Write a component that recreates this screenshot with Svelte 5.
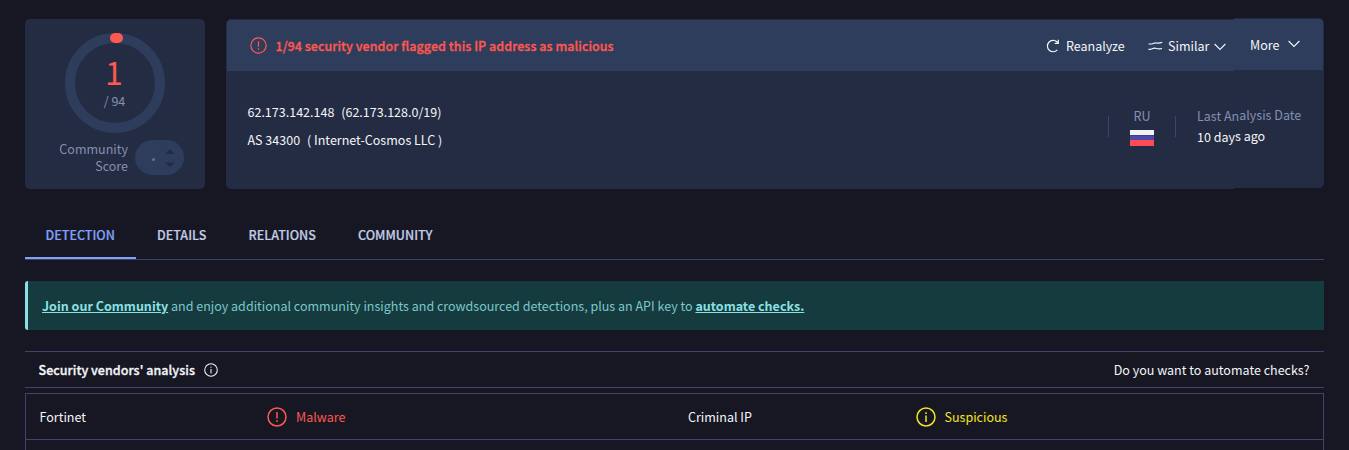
<script>
  const tabs = [
    { label: 'DETECTION', left: 20.5, width: 111, active: true },
    { label: 'DETAILS', left: 21, width: 92 },
    { label: 'RELATIONS', left: 20.5, width: 109 },
    { label: 'COMMUNITY', left: 21, width: 117 }
  ];
</script>

{#snippet alertIcon(size, stroke)}
  <svg class="icon" width={size} height={size} viewBox="0 0 20 20" fill="none" stroke="currentColor" stroke-width={stroke}>
    <circle cx="10" cy="10" r="9" />
    <path d="M10 5v6.5M10 13.3v1.6" />
  </svg>
{/snippet}

{#snippet infoIcon(size, stroke)}
  <svg class="icon" width={size} height={size} viewBox="0 0 20 20" fill="none" stroke="currentColor" stroke-width={stroke}>
    <circle cx="10" cy="10" r="9" />
    <path d="M10 8.6v6.4M10 5.2v1.7" />
  </svg>
{/snippet}

{#snippet chevron()}
  <svg class="icon" width="12" height="8" viewBox="0 0 12 8" fill="none" stroke="currentColor" stroke-width="1.1">
    <path d="M.6 1 6 6.4 11.4 1" />
  </svg>
{/snippet}

<main>
  <section class="top">
    <div class="score">
      <div class="dial">
        <svg width="100" height="100" viewBox="0 0 100 100" fill="none">
          <circle cx="50" cy="50" r="45" stroke="#2e3d5c" stroke-width="10" />
          <path d="M50 5h3" stroke="#ff5850" stroke-width="10" stroke-linecap="round" />
        </svg>
        <div class="count"><b>1</b><span>/ 94</span></div>
      </div>
      <div class="community">
        <div class="clabel">Community<br />Score</div>
        <div class="pill">
          <i></i>
          <svg width="10" height="18" viewBox="0 0 10 18" fill="#242c43"><path d="M0 5 5 0l5 5zM0 13.500h10L5 18z" /></svg>
        </div>
      </div>
    </div>

    <div class="card">
      <div class="panel main">
        <div class="bar">
          {@render alertIcon(17, 1.4)}
          <strong>1/94 security vendor flagged this IP address as malicious</strong>
          <span class="action re">
            <svg class="icon" width="14" height="14" viewBox="0 0 14 14" fill="none" stroke="currentColor" stroke-width="1.2">
              <path d="M11.300 10.900A5.700 5.700 0 1 1 10.900 2.800L12.200 4.100M12.300.8v3.600H8.700" />
            </svg>
            Reanalyze
          </span>
          <span class="action sim">
            <svg class="icon" width="15" height="10" viewBox="0 0 15 10" fill="none" stroke="currentColor" stroke-width="1.200">
              <path d="M.5 3h2.300C5 3 5.800 1.700 7.800 2s3.700.6 6.400-.7M.5 8.300h1.300C4 8.300 4.800 6.900 6.800 7.200s3.200.9 5.200.6l2-.3" />
            </svg>
            <span>Similar</span>
            {@render chevron()}
          </span>
        </div>
        <div class="body">
          <div class="ip">
            <div>62.173.142.148&nbsp; <span>(62.173.128.0/19)</span></div>
            <div>AS 34300&nbsp; <span>( Internet-Cosmos LLC )</span></div>
          </div>
          <div class="country">
            <span>RU</span>
            <div class="flag"></div>
          </div>
          <div class="date">
            <div class="muted">Last An<span>alysis Date</span></div>
            <div class="when">10 day<span>s ago</span></div>
          </div>
        </div>
      </div>
      <div class="panel side">
        <div class="bar"><span class="more">More</span>{@render chevron()}</div>
      </div>
    </div>
  </section>

  <nav>
    {#each tabs as t}
      <div class="tab" class:active={t.active} style="width:{t.width}px;padding-left:{t.left}px">{t.label}</div>
    {/each}
  </nav>

  <p class="banner"><a>Join our Community</a> and enjoy additional community insights and crowdsourced detections, plus an API key to <a>automate checks.</a></p>

  <div class="heading">
    <strong>Security vendors' analysis</strong>
    {@render infoIcon(14, 1.500)}
    <span>Do you want to automate checks?</span>
  </div>

  <div class="table">
    <div class="row">
      <span>Fortinet</span>
      <span class="verdict bad">{@render alertIcon(20, 1.500)}Malware</span>
      <span>Criminal IP</span>
      <span class="verdict warn">{@render infoIcon(20, 1.500)}Suspicious</span>
    </div>
    <div class="row"></div>
  </div>
</main>

<style>
  :global(body) { background: #171723; overflow: hidden; }
  * { box-sizing: border-box; }
  main {
    width: 1349px; height: 450px; padding: 19px 25px 0; overflow: hidden;
    font: 12.52px/18px "Noto Sans CJK SC", "Noto Sans CJK JP", sans-serif;
    color: #f4f5f8; white-space: nowrap;
  }
  strong { font-weight: 500; letter-spacing: .04px; -webkit-text-stroke: .3px currentColor; }
  .icon { flex: none; display: block; }
  .top { display: flex; gap: 21px; height: 170px; }
  .score { width: 180px; background: #242c43; border-radius: 5px; padding: 14px 0 0 40px; }
  .dial { display: grid; width: 100px; height: 100px; }
  .dial > * { grid-area: 1 / 1; }
  .count { display: flex; flex-direction: column; align-items: center; padding-top: 17px; color: #8290b1; }
  .count b { font-weight: 400; font-size: 32px; line-height: 42px; color: #ff5850; margin-right: 2px; }
  .count span { line-height: 18px; margin-right: 1px; }
  .community { display: flex; margin-left: -20px; gap: 7px; }
  .clabel { width: 83px; text-align: right; line-height: 17px; color: #8290b1; padding-top: 7px; }
  .pill { width: 49px; height: 35px; border-radius: 18px; background: #2e3d5c; margin-top: 7px; display: flex; align-items: center; padding-left: 17px; gap: 10px; }
  .pill i { width: 3px; height: 3px; border-radius: 50%; background: #61728f; margin-top: 3px; }
  .card { display: flex; width: 1098px; }
  .panel { background: #242c43; height: 170px; }
  .panel.main { width: 1008px; border-radius: 5px 0 0 5px; position: relative; z-index: 1; padding: 1px 0 0 1px; }
  .panel.side { width: 90px; margin-top: -1px; border-radius: 0 5px 5px 0; padding: 1px 1px 0 0; }
  .bar { height: 51px; background: #2e3d5c; display: flex; align-items: center; }
  .main .bar { border-radius: 4px 0 0 0; padding-left: 23px; color: #ff5850; }
  .main .bar strong { margin-left: 8.5px; width: 770.5px; }
  .action { display: flex; align-items: center; color: #f4f5f8; }
  .re { gap: 6px; width: 102px; }
  .sim { gap: 5px; }
  .sim span { width: 41px; }
  .sim span + .icon { margin-top: 2px; }
  .side .bar { border-radius: 0 4px 0 0; padding-left: 16px; }
  .side .icon { margin-top: -2px; }
  .more { width: 38px; }
  .body { display: flex; height: 118px; padding-left: 20.5px; }
  .body > * { flex: none; }
  .ip { width: 860.5px; padding-top: 27px; line-height: 28px; }
  .ip span { margin-left: 1.3px; }
  .country { display: flex; flex-direction: column; align-items: center; width: 68px; height: 21px; border: solid #3a4867; border-width: 0 1px; margin-top: 45px; color: #8290b1; }
  .country span { margin-top: -9px; line-height: 18px; }
  .flag { flex: none; width: 24px; height: 16px; margin-top: 5px; background: linear-gradient(#f3f3f5 5px, #3b3e91 5px 6px, #4b4ba7 6px 10px, #ff4b55 10px); }
  .date { padding: 34px 0 0 21px; line-height: 21px; width: 130px; }
  .date span { position: relative; top: -1px; }
  .muted { color: #8290b1; }
  nav { display: flex; margin-top: 23px; height: 48px; border-bottom: 1px solid #37456a; font-weight: 500; -webkit-text-stroke: .2px currentColor; color: #c0cce4; }
  .tab { padding-top: 14px; height: 47px; }
  .tab.active { color: #80a0f8; border-bottom: 2px solid #80a0f8; }
  .banner { margin: 21px 0 0; height: 49px; border-left: 3px solid #8be0e3; border-radius: 3px 0 0 3px; background: #153b3e; color: #7bc7cb; padding-left: 14px; line-height: 50px; }
  .banner a { font-weight: 700; color: #8be0e3; text-decoration: underline; }
  .heading { height: 37px; margin-top: 21px; border: solid #3c4569; border-width: 1px 0; display: flex; align-items: center; padding: 0 14.5px 0 13.5px; gap: 9px; }
  .heading span { margin-left: auto; }
  .table { margin-top: 5px; border: 1px solid #3c4569; height: 80px; }
  .row { height: 46px; border-bottom: 1px solid #3c4569; display: grid; grid-template-columns: 227.5px 421px 227.5px 1fr; align-items: center; padding-left: 13.5px; }
  .verdict { display: flex; align-items: center; gap: 9px; }
  .bad { color: #ff5850; }
  .warn { color: #f4e522; }
</style>
